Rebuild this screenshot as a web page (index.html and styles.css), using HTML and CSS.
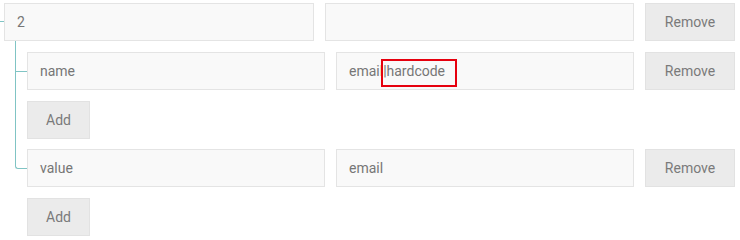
FILE: index.html
```html
<!DOCTYPE html>
<html lang="en">
<head>
<meta charset="utf-8">
<title>Tree editor</title>
<link rel="stylesheet" href="styles.css">
</head>
<body>
<div class="tree">
  <div class="node">
    <div class="row root-row">
      <div class="field">2</div>
      <div class="field"></div>
      <button class="btn remove">Remove</button>
    </div>
    <div class="children">
      <div class="child">
        <div class="row">
          <div class="field">name</div>
          <div class="field marked">email|hardcode<span class="mark"></span></div>
          <button class="btn remove">Remove</button>
        </div>
        <button class="btn add">Add</button>
      </div>
      <div class="child last">
        <div class="row">
          <div class="field">value</div>
          <div class="field">email</div>
          <button class="btn remove">Remove</button>
        </div>
        <button class="btn add">Add</button>
      </div>
    </div>
  </div>
</div>
</body>
</html>
```

FILE: styles.css
```css
html, body {
  margin: 0;
  background: #ffffff;
}

body {
  font-family: Roboto, "Liberation Sans", sans-serif;
  font-size: 14px;
  color: #767676;
}

.tree {
  padding: 3px 5px 0 4px;
}

.row {
  display: flex;
  gap: 11px;
  height: 38px;
}

.root-row {
  position: relative;
}

.root-row::before {
  content: "";
  position: absolute;
  left: -4px;
  top: 18px;
  width: 4px;
  border-top: 1px solid #80c4c4;
}

.field {
  position: relative;
  flex: 1 1 0;
  box-sizing: border-box;
  height: 38px;
  padding: 0 12px;
  display: flex;
  align-items: center;
  background: #f9f9f9;
  border: 1px solid #e4e4e4;
  color: #767676;
  white-space: nowrap;
}

.mark {
  position: absolute;
  left: 44px;
  top: 6px;
  width: 76px;
  height: 28px;
  box-sizing: border-box;
  border: 2px solid #e6000e;
}

.btn {
  box-sizing: border-box;
  height: 38px;
  padding: 0;
  background: #ebebeb;
  border: 1px solid #e2e2e2;
  color: #7a7a7a;
  font-family: Roboto, "Liberation Sans", sans-serif;
  font-size: 14px;
}

.remove {
  flex: 0 0 90px;
  width: 90px;
}

.add {
  display: block;
  width: 63px;
  margin-top: 11px;
}

.children {
  margin-top: 11px;
  padding-left: 23px;
  display: flex;
  flex-direction: column;
  gap: 10px;
}

.child {
  position: relative;
}

.child::before {
  content: "";
  position: absolute;
  left: -12px;
  top: -11px;
  width: 12px;
  height: 31px;
  box-sizing: border-box;
  border-left: 1px solid #80c4c4;
  border-bottom: 1px solid #80c4c4;
}

.child::after {
  content: "";
  position: absolute;
  left: -12px;
  top: 19px;
  bottom: -10px;
  border-left: 1px solid #80c4c4;
}

.child.last::before {
  top: -10px;
  height: 30px;
  border-bottom-left-radius: 3px;
}

.child.last::after {
  display: none;
}
```
